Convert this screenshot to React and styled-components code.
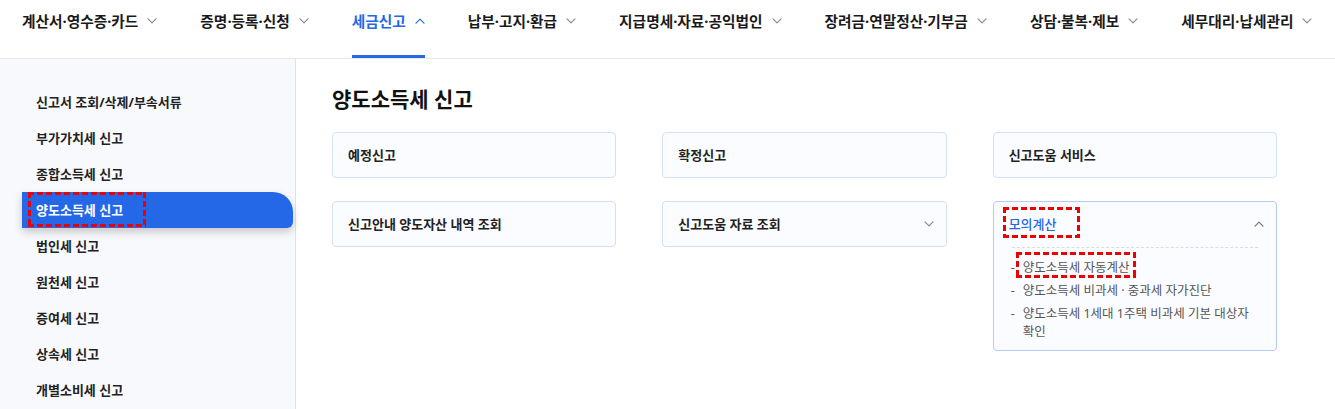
import React from "react";
import styled, { createGlobalStyle, css } from "styled-components";

const BLUE = "#2468e8";
const RED = "#ee0000";

const GlobalStyle = createGlobalStyle`
  * { box-sizing: border-box; }
  html, body { margin: 0; padding: 0; background: #fff; }
  body {
    font-family: "Noto Sans", "Noto Sans CJK KR", sans-serif;
    color: #222;
    -webkit-font-smoothing: antialiased;
  }
  a { text-decoration: none; color: inherit; }
`;

const dashed = css`
  background:
    repeating-linear-gradient(90deg, ${RED} 0 6px, transparent 6px 9px) left top / 100% 3px no-repeat,
    repeating-linear-gradient(90deg, ${RED} 0 6px, transparent 6px 9px) left bottom / 100% 3px no-repeat,
    repeating-linear-gradient(180deg, ${RED} 0 6px, transparent 6px 9px) left top / 3px 100% no-repeat,
    repeating-linear-gradient(180deg, ${RED} 0 6px, transparent 6px 9px) right top / 3px 100% no-repeat;
`;

const Mark = styled.span`
  position: relative;
  display: inline-block;
  &::after {
    content: "";
    position: absolute;
    top: ${(p) => p.$t}px;
    right: ${(p) => p.$r}px;
    bottom: ${(p) => p.$b}px;
    left: ${(p) => p.$l}px;
    pointer-events: none;
    ${dashed}
  }
`;

const Page = styled.div`
  min-height: 100vh;
  display: flex;
  flex-direction: column;
`;

const Header = styled.header`
  height: 59px;
  display: flex;
  gap: 43px;
  padding-left: 22px;
  border-bottom: 1px solid #e8e8e8;
  background: #fff;
  overflow: hidden;
`;

const NavItem = styled.a`
  display: flex;
  align-items: flex-start;
  gap: 9px;
  height: 58px;
  padding-top: 10px;
  font-size: 14.7px;
  line-height: 22px;
  font-weight: 700;
  white-space: nowrap;
  flex-shrink: 0;
  color: ${(p) => (p.$active ? BLUE : "#1a1a1a")};
  border-bottom: 3px solid ${(p) => (p.$active ? BLUE : "transparent")};
`;

const ChevronBox = styled.span`
  display: flex;
  align-items: center;
  height: ${(p) => p.$h || 22}px;
`;

const Chevron = ({ up, color = "#8a8a8a", h }) => (
  <ChevronBox $h={h}>
    <svg width="10" height="6" viewBox="0 0 10 6" fill="none">
      <path
        d={up ? "M1 5.2 L5 1.2 L9 5.2" : "M1 0.8 L5 4.8 L9 0.8"}
        stroke={color}
        strokeWidth="1.2"
        strokeLinecap="round"
        strokeLinejoin="round"
      />
    </svg>
  </ChevronBox>
);

const Body = styled.div`
  flex: 1;
  display: flex;
`;

const Sidebar = styled.nav`
  width: 296px;
  flex-shrink: 0;
  background: #f8f9fd;
  border-right: 1px solid #d8e3f9;
  padding: 25px 2px 0 22px;
`;

const SideItem = styled.a`
  display: flex;
  align-items: center;
  height: 36px;
  line-height: 36px;
  padding-left: 14px;
  font-size: 13px;
  font-weight: 700;
  white-space: nowrap;
  color: ${(p) => (p.$active ? "#fff" : "#222")};
  background: ${(p) => (p.$active ? BLUE : "transparent")};
  border-radius: ${(p) => (p.$active ? "0 20px 6px 0" : "0")};
  box-shadow: ${(p) => (p.$active ? "0 4px 9px rgba(0, 0, 0, 0.2)" : "none")};
`;

const Main = styled.main`
  flex: 1;
  padding: 25px 58px 0 36px;
`;

const Title = styled.h2`
  margin: 0 0 18px;
  font-size: 21px;
  line-height: 30px;
  font-weight: 700;
  color: #111;
`;

const Grid = styled.div`
  display: grid;
  grid-template-columns: repeat(3, 1fr);
  column-gap: 46px;
  row-gap: 23px;
  align-items: start;
`;

const Card = styled.div`
  border: 1px solid ${(p) => (p.$open ? "#b4cbf3" : "#d3e0fa")};
  border-radius: 4px;
  background: #fbfcff;
`;

const CardHead = styled.div`
  display: flex;
  align-items: center;
  justify-content: space-between;
  height: 44px;
  padding: 0 12px 0 15px;
`;

const CardTitle = styled.span`
  font-size: 13px;
  line-height: 20px;
  font-weight: ${(p) => (p.$open ? 500 : 700)};
  color: ${(p) => (p.$open ? BLUE : "#222")};
`;

const Divider = styled.div`
  margin: 1px 18px 0;
  border-top: 1px dashed #dcdcdc;
`;

const SubList = styled.ul`
  margin: 0;
  list-style: none;
  padding: 11px 18px 9px 29px;
  display: flex;
  flex-direction: column;
  gap: 5px;
`;

const SubItem = styled.li`
  position: relative;
  font-size: 12.5px;
  line-height: 18px;
  color: #555;
  &::before {
    content: "-";
    position: absolute;
    left: -12px;
    top: 0;
    color: #555;
  }
`;

const navItems = [
  "계산서·영수증·카드",
  "증명·등록·신청",
  "세금신고",
  "납부·고지·환급",
  "지급명세·자료·공익법인",
  "장려금·연말정산·기부금",
  "상담·불복·제보",
  "세무대리·납세관리",
];

const sideItems = [
  "신고서 조회/삭제/부속서류",
  "부가가치세 신고",
  "종합소득세 신고",
  "양도소득세 신고",
  "법인세 신고",
  "원천세 신고",
  "증여세 신고",
  "상속세 신고",
  "개별소비세 신고",
];

export default function App() {
  return (
    <Page>
      <GlobalStyle />
      <Header>
        {navItems.map((n) => {
          const active = n === "세금신고";
          return (
            <NavItem key={n} $active={active}>
              <span>{n}</span>
              <Chevron up={active} color={active ? BLUE : "#8a8a8a"} />
            </NavItem>
          );
        })}
      </Header>
      <Body>
        <Sidebar>
          {sideItems.map((s) => {
            const active = s === "양도소득세 신고";
            return (
              <SideItem key={s} $active={active}>
                {active ? (
                  <Mark $t={0} $r={-23} $b={1} $l={-8}>
                    {s}
                  </Mark>
                ) : (
                  s
                )}
              </SideItem>
            );
          })}
        </Sidebar>
        <Main>
          <Title>양도소득세 신고</Title>
          <Grid>
            <Card>
              <CardHead>
                <CardTitle>예정신고</CardTitle>
              </CardHead>
            </Card>
            <Card>
              <CardHead>
                <CardTitle>확정신고</CardTitle>
              </CardHead>
            </Card>
            <Card>
              <CardHead>
                <CardTitle>신고도움 서비스</CardTitle>
              </CardHead>
            </Card>
            <Card>
              <CardHead>
                <CardTitle>신고안내 양도자산 내역 조회</CardTitle>
              </CardHead>
            </Card>
            <Card>
              <CardHead>
                <CardTitle>신고도움 자료 조회</CardTitle>
                <Chevron h={20} />
              </CardHead>
            </Card>
            <Card $open>
              <CardHead>
                <CardTitle $open>
                  <Mark $t={-7} $r={-23} $b={-4} $l={-6}>
                    모의계산
                  </Mark>
                </CardTitle>
                <Chevron up h={20} color="#777" />
              </CardHead>
              <Divider />
              <SubList>
                <SubItem>
                  <Mark $t={-7} $r={-7} $b={-1} $l={-7}>
                    양도소득세 자동계산
                  </Mark>
                </SubItem>
                <SubItem>양도소득세 비과세 · 중과세 자가진단</SubItem>
                <SubItem>양도소득세 1세대 1주택 비과세 기본 대상자 확인</SubItem>
              </SubList>
            </Card>
          </Grid>
        </Main>
      </Body>
    </Page>
  );
}
